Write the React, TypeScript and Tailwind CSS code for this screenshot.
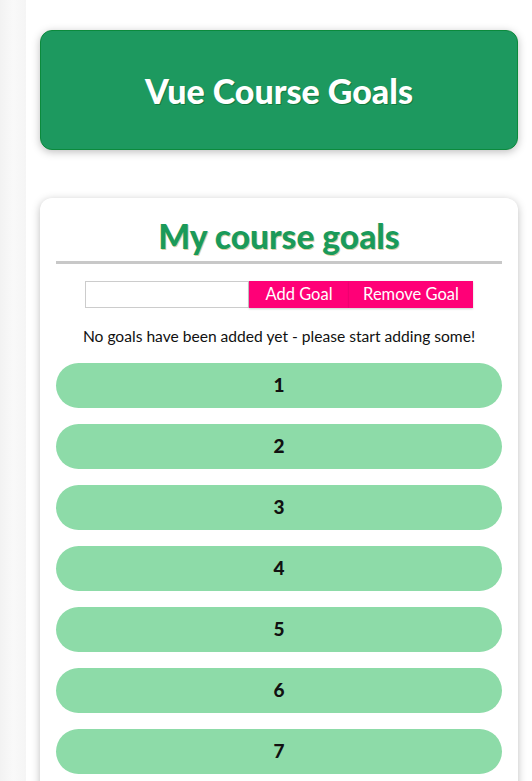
import React from 'react';

const goals = [1, 2, 3, 4, 5, 6, 7];

export default function App() {
  return (
    <div className="flex min-h-[781px] bg-white font-['Lato',sans-serif] overflow-hidden">
      {/* faint edge on the left */}
      <div className="w-[26px] shrink-0 bg-gradient-to-r from-[#f2f2f2] via-[#f9f9f9] to-[#f5f5f5]" />

      <div className="w-[478px] ml-[14px] shrink-0">
        {/* Header */}
        <header className="mt-[30px] h-[120px] flex items-center justify-center rounded-xl border border-[#0b8a3c] bg-[#1d995f] shadow-[0_2px_8px_rgba(0,0,0,0.26)]">
          <h1 className="text-[34px] font-black text-white [text-shadow:1px_1px_0_#137a3e]">Vue Course Goals</h1>
        </header>

        {/* Goals card */}
        <section className="mt-[48px] rounded-xl bg-white px-4 pt-[18px] pb-6 shadow-[0_2px_8px_rgba(0,0,0,0.26)]">
          <h2 className="text-center text-[33.5px] font-black leading-[40px] text-[#1a9a5a] [text-shadow:1px_1px_0_rgba(170,150,50,0.45)]">My course goals</h2>
          <div className="mt-[5px] h-[3px] bg-[#c8c8c8]" />

          <div className="mt-[17px] flex justify-center">
            <input type="text" className="h-[27px] w-[164px] border border-[#cccccc] bg-white px-1 outline-none" />
            <button className="h-[27px] w-[100px] bg-[#ff0077] text-[16.5px] text-white shadow-[0_1px_2px_rgba(0,0,0,0.2)]">Add Goal</button>
            <button className="h-[27px] w-[124px] bg-[#ff0077] text-[16.5px] text-white shadow-[0_1px_2px_rgba(0,0,0,0.2)]">Remove Goal</button>
          </div>

          <p className="mt-[17px] text-center text-[15.6px] leading-[22px] text-[#111111]">
            No goals have been added yet - please start adding some!
          </p>

          <ul className="mt-[16px] flex flex-col gap-4">
            {goals.map((g) => (
              <li key={g} className="flex h-[45px] items-center justify-center rounded-full bg-[#8ddba8] text-[19px] font-black text-[#111111]">
                {g}
              </li>
            ))}
          </ul>
        </section>
      </div>
    </div>
  );
}
